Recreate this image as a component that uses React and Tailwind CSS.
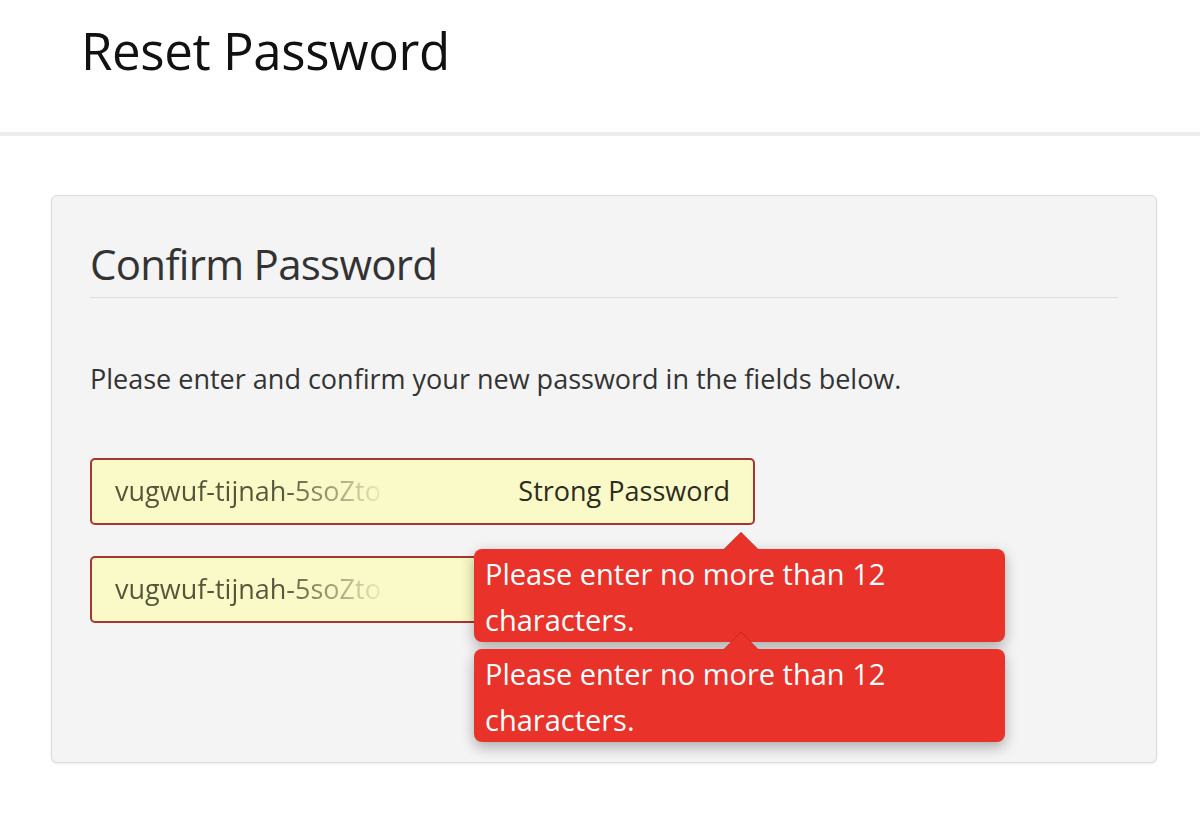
import React from 'react'

const Tip = ({ top }) => (
  <div
    className="absolute left-[422px] w-[531px] h-[93px] rounded-[8px] bg-[#e9322a] pl-[11px] pt-[2px] text-[29px] leading-[46px] text-white shadow-[0_5px_14px_rgba(0,0,0,0.3)]"
    style={{ top }}
  >
    <svg className="absolute left-[249px] top-[-17px]" width="36" height="18" viewBox="0 0 36 18">
      <path d="M0 18 L18 0 L36 18 Z" fill="#e9322a" />
      <path d="M0 18 L18 0 L36 18" fill="none" stroke="rgba(0,0,0,0.18)" strokeWidth="1" />
    </svg>
    <p className="relative">Please enter no more than 12</p>
    <p className="relative">characters.</p>
  </div>
)

const Field = ({ strength }) => (
  <div className="flex h-[67px] w-[665px] items-center justify-between rounded-[5px] border-2 border-[#a8352f] bg-[#fafac8] px-[23px] text-[27px]">
    <span className="w-[275px] bg-linear-to-r from-[#55553a] from-[60%] to-[#fafac8] to-[100%] bg-clip-text text-transparent whitespace-nowrap overflow-hidden">
      vugwuf-tijnah-5soZto
    </span>
    {strength && <span className="text-[#2c2c22]">Strong Password</span>}
  </div>
)

export default function App() {
  return (
    <div className="min-h-[814px] bg-white font-['Open_Sans',sans-serif] text-[#333]">
      <header className="h-[136px] border-b-4 border-[#ececec] pl-[81px] pt-[15px]">
        <h1 className="text-[51px] leading-[70px] tracking-[-0.4px] text-[#111]">Reset Password</h1>
      </header>
      <main className="px-[51px] pt-[59px]">
        <div className="relative h-[568px] w-[1106px] rounded-[6px] border border-[#dcdcdc] bg-[#f4f4f4] px-[38px] pt-[38px] shadow-[0_1px_2px_rgba(0,0,0,0.08)]">
          <h2 className="text-[42px] leading-[60px] tracking-[-0.7px] text-[#333]">Confirm Password</h2>
          <div className="mt-[3px] border-t border-[#dddddd]" />
          <p className="mt-[63px] text-[27px] leading-[36px] text-[#333]">
            Please enter and confirm your new password in the fields below.
          </p>
          <div className="mt-[61px] flex flex-col gap-[31px]">
            <Field strength />
            <Field />
          </div>
          <Tip top={353} />
          <Tip top={453} />
        </div>
      </main>
    </div>
  )
}
